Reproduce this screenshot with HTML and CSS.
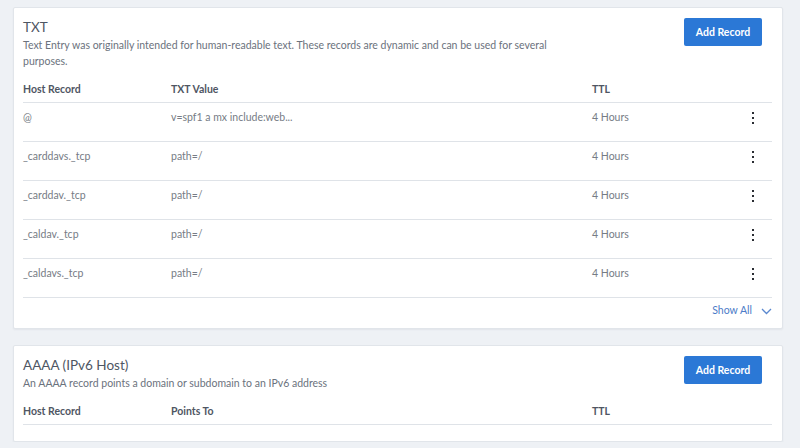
FILE: index.html
```html
<!DOCTYPE html>
<html lang="en">
<head>
<meta charset="utf-8">
<title>DNS Records</title>
<link rel="stylesheet" href="styles.css">
</head>
<body>
<main class="page">
  <section class="card">
    <div class="card-head">
      <div class="card-info">
        <h2 class="card-title">TXT</h2>
        <p class="card-desc">Text Entry was originally intended for human-readable text. These records are dynamic and can be used for several purposes.</p>
      </div>
      <button class="btn-primary" type="button">Add Record</button>
    </div>
    <div class="table">
      <div class="row row-head">
        <div class="cell">Host Record</div>
        <div class="cell">TXT Value</div>
        <div class="cell">TTL</div>
        <div class="cell"></div>
      </div>
      <div class="row">
        <div class="cell">@</div>
        <div class="cell">v=spf1 a mx include:web...</div>
        <div class="cell">4 Hours</div>
        <div class="cell cell-menu"><span class="kebab"><i></i><i></i><i></i></span></div>
      </div>
      <div class="row">
        <div class="cell">_carddavs._tcp</div>
        <div class="cell">path=/</div>
        <div class="cell">4 Hours</div>
        <div class="cell cell-menu"><span class="kebab"><i></i><i></i><i></i></span></div>
      </div>
      <div class="row">
        <div class="cell">_carddav._tcp</div>
        <div class="cell">path=/</div>
        <div class="cell">4 Hours</div>
        <div class="cell cell-menu"><span class="kebab"><i></i><i></i><i></i></span></div>
      </div>
      <div class="row">
        <div class="cell">_caldav._tcp</div>
        <div class="cell">path=/</div>
        <div class="cell">4 Hours</div>
        <div class="cell cell-menu"><span class="kebab"><i></i><i></i><i></i></span></div>
      </div>
      <div class="row">
        <div class="cell">_caldavs._tcp</div>
        <div class="cell">path=/</div>
        <div class="cell">4 Hours</div>
        <div class="cell cell-menu"><span class="kebab"><i></i><i></i><i></i></span></div>
      </div>
    </div>
    <div class="card-foot">
      <a class="show-all" href="#">Show All
        <svg class="chev" width="11" height="7" viewBox="0 0 11 7"><path d="M1 1 L5.5 5.5 L10 1" fill="none" stroke="currentColor" stroke-width="1.3"/></svg>
      </a>
    </div>
  </section>

  <section class="card card-short">
    <div class="card-head">
      <div class="card-info">
        <h2 class="card-title">AAAA (IPv6 Host)</h2>
        <p class="card-desc">An AAAA record points a domain or subdomain to an IPv6 address</p>
      </div>
      <button class="btn-primary" type="button">Add Record</button>
    </div>
    <div class="table">
      <div class="row row-head">
        <div class="cell">Host Record</div>
        <div class="cell">Points To</div>
        <div class="cell">TTL</div>
        <div class="cell"></div>
      </div>
    </div>
  </section>
</main>
</body>
</html>
```

FILE: styles.css
```css
* { box-sizing: border-box; }

html, body {
  margin: 0;
  padding: 0;
  background: #eef1f5;
  font-family: Lato, "Open Sans", "Liberation Sans", sans-serif;
}

.page {
  padding: 7px 17px 0 13px;
  display: flex;
  flex-direction: column;
  gap: 16px;
}

.card {
  background: #fff;
  border: 1px solid #e1e5ea;
  border-radius: 2px;
  box-shadow: 0 1px 2px rgba(30, 40, 60, 0.06);
  padding: 11px 10px 0 9px;
}

.card-short { padding-bottom: 16px; }

.card-head {
  display: flex;
  justify-content: space-between;
  align-items: flex-start;
  padding-right: 10px;
}

.card-title {
  margin: 0;
  font-size: 13.5px;
  line-height: 16px;
  font-weight: 400;
  color: #4e5663;
}

.card-desc {
  margin: 2px 0 0;
  width: 540px;
  font-size: 10.5px;
  line-height: 16px;
  color: #6b727d;
}

.btn-primary {
  margin-top: -1px;
  width: 78px;
  height: 28px;
  border: none;
  border-radius: 2px;
  background: #2b78d6;
  color: #fff;
  font-family: inherit;
  font-size: 10.5px;
  font-weight: 700;
  cursor: pointer;
}

.table { margin-top: 12px; }

.row {
  display: grid;
  grid-template-columns: 148px 421px 1fr 38px;
  height: 39px;
  padding-top: 6px;
  border-bottom: 1px solid #dfe3e8;
  font-size: 10.5px;
  line-height: 16px;
  color: #767c85;
}

.row-head {
  height: auto;
  padding: 0 0 5px;
  font-weight: 700;
  color: #4f5663;
}

.cell-menu {
  display: flex;
  justify-content: center;
  padding-top: 3px;
}

.kebab {
  display: flex;
  flex-direction: column;
  gap: 3px;
}

.kebab i {
  display: block;
  width: 2px;
  height: 2px;
  background: #2a2d33;
}

.card-foot {
  display: flex;
  justify-content: flex-end;
  padding: 4px 0 10px;
}

.show-all {
  display: flex;
  align-items: center;
  gap: 9px;
  font-size: 10.5px;
  line-height: 16px;
  color: #4c7cc8;
  text-decoration: none;
}

.chev { color: #5a88cf; margin-top: 2px; }
```
